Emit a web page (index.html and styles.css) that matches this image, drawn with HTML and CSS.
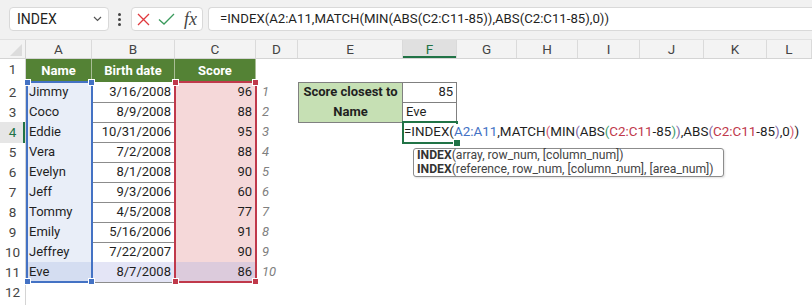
FILE: index.html
```html
<!DOCTYPE html>
<html lang="en">
  <head>
    <meta charset="UTF-8" />
    <title>INDEX MATCH closest score</title>
    <link rel="stylesheet" href="styles.css">
  </head>
  <body>
    <!-- Formula bar -->
    <header class="toolbar">
      <div class="namebox">
        <span>INDEX</span>
        <svg width="9" height="6" viewBox="0 0 9 6"><path d="M1 1l3.5 3.5L8 1" fill="none" stroke="#555" stroke-width="1.2"/></svg>
      </div>
      <div class="grip"><i></i><i></i><i></i></div>
      <div class="fxbox">
        <svg class="cancel" width="13" height="13" viewBox="0 0 13 13"><path d="M1 1l11 11M12 1L1 12" stroke="#e0393e" stroke-width="1.3" fill="none"/></svg>
        <svg class="enter" width="17" height="12" viewBox="0 0 17 12"><path d="M1 6.5l5 4.5L16 1" stroke="#3a9a5c" stroke-width="1.3" fill="none"/></svg>
        <span class="fx">fx</span>
      </div>
      <div class="formula">=INDEX(A2:A11,MATCH(MIN(ABS(C2:C11-85)),ABS(C2:C11-85),0))</div>
    </header>

    <!-- Worksheet -->
    <main class="sheet">
      <div class="row colhead">
        <div class="corner"></div>
        <div class="ch">A</div><div class="ch">B</div><div class="ch">C</div><div class="ch">D</div>
        <div class="ch">E</div><div class="ch on">F</div><div class="ch">G</div><div class="ch">H</div>
        <div class="ch">I</div><div class="ch">J</div><div class="ch">K</div><div class="ch">L</div>
      </div>

      <div class="row r1">
        <div class="rh">1</div>
        <div class="c hd">Name</div><div class="c hd">Birth date</div><div class="c hd">Score</div>
      </div>
      <div class="row">
        <div class="rh">2</div>
        <div class="c t a">Jimmy</div><div class="c t num">3/16/2008</div><div class="c t s num">96</div>
        <div class="c rank">1</div>
        <div class="c lbl top">Score closest to</div><div class="c val top num">85</div>
      </div>
      <div class="row">
        <div class="rh">3</div>
        <div class="c t a">Coco</div><div class="c t num">8/9/2008</div><div class="c t s num">88</div>
        <div class="c rank">2</div>
        <div class="c lbl">Name</div><div class="c val">Eve</div>
      </div>
      <div class="row">
        <div class="rh on">4</div>
        <div class="c t a">Eddie</div><div class="c t num">10/31/2006</div><div class="c t s num">95</div>
        <div class="c rank">3</div>
        <div class="c"></div>
        <div class="c active">
          <span class="edit">=INDEX(<span class="ref-a">A2:A11</span>,MATCH<span class="p2">(</span>MIN<span class="p3">(</span>ABS<span class="p4">(</span><span class="ref-c">C2:C11</span>-85<span class="p4">)</span><span class="p3">)</span>,ABS<span class="p3">(</span><span class="ref-c">C2:C11</span>-85<span class="p3">)</span>,0<span class="p2">)</span>)</span>
        </div>
      </div>
      <div class="row">
        <div class="rh">5</div>
        <div class="c t a">Vera</div><div class="c t num">7/2/2008</div><div class="c t s num">88</div>
        <div class="c rank">4</div>
      </div>
      <div class="row">
        <div class="rh">6</div>
        <div class="c t a">Evelyn</div><div class="c t num">8/1/2008</div><div class="c t s num">90</div>
        <div class="c rank">5</div>
      </div>
      <div class="row">
        <div class="rh">7</div>
        <div class="c t a">Jeff</div><div class="c t num">9/3/2006</div><div class="c t s num">60</div>
        <div class="c rank">6</div>
      </div>
      <div class="row">
        <div class="rh">8</div>
        <div class="c t a">Tommy</div><div class="c t num">4/5/2008</div><div class="c t s num">77</div>
        <div class="c rank">7</div>
      </div>
      <div class="row">
        <div class="rh">9</div>
        <div class="c t a">Emily</div><div class="c t num">5/16/2006</div><div class="c t s num">91</div>
        <div class="c rank">8</div>
      </div>
      <div class="row">
        <div class="rh">10</div>
        <div class="c t a">Jeffrey</div><div class="c t num">7/22/2007</div><div class="c t s num">90</div>
        <div class="c rank">9</div>
      </div>
      <div class="row">
        <div class="rh">11</div>
        <div class="c t a hit">Eve</div><div class="c t num hit">8/7/2008</div><div class="c t s num hit">86</div>
        <div class="c rank">10</div>
      </div>
      <div class="row last"><div class="rh">12</div></div>

      <!-- range highlights while editing -->
      <div class="range blue"><i class="tl"></i><i class="tr"></i><i class="bl"></i><i class="br"></i></div>
      <div class="range red"><i class="tl"></i><i class="tr"></i><i class="bl"></i><i class="br"></i></div>

      <div class="tip">
        <div><b>INDEX</b>(array, row_num, [column_num])</div>
        <div><b>INDEX</b>(reference, row_num, [column_num], [area_num])</div>
      </div>
    </main>
  </body>
</html>
```

FILE: styles.css
```css
* {
  box-sizing: border-box;
}

body {
  margin: 0;
  width: 812px;
  height: 305px;
  overflow: hidden;
  background: #fff;
  color: #1f1f1f;
  font-family: Roboto, "Liberation Sans", sans-serif;
}

/* Formula bar */
.toolbar {
  display: flex;
  align-items: center;
  height: 40px;
  padding: 0 0 1px 9px;
  background: #f1f1f1;
  border-bottom: 1px solid #e1e1e1;
}
.namebox {
  display: flex;
  align-items: center;
  justify-content: space-between;
  width: 100px;
  height: 24px;
  padding: 0 6px 0 7px;
  background: #fff;
  border: 1px solid #d9d9d9;
  border-radius: 4px;
  font-size: 14px;
}
.grip {
  display: flex;
  flex-direction: column;
  gap: 2px;
  margin: 0 10px 0 9px;
}
.grip i {
  width: 3px;
  height: 3px;
  border-radius: 50%;
  background: #444;
}
.fxbox {
  display: flex;
  align-items: center;
  width: 72px;
  height: 24px;
  padding-left: 5px;
  background: #fff;
  border: 1px solid #d9d9d9;
  border-radius: 4px;
}
.fxbox .enter {
  margin-left: 8px;
}
.fx {
  margin-left: 9px;
  font-family: "Liberation Serif", serif;
  font-style: italic;
  font-size: 18px;
  color: #444;
  line-height: 1;
}
.formula {
  flex: 1;
  height: 24px;
  margin-left: 5px;
  padding-left: 11px;
  background: #fff;
  border: 1px solid #d9d9d9;
  border-right: 0;
  border-radius: 4px 0 0 4px;
  font-size: 13.2px;
  line-height: 22px;
  white-space: nowrap;
}

/* Worksheet grid */
.sheet {
  position: relative;
  font-family: Roboto, "Liberation Sans", sans-serif;
  font-size: 13px;
}
.row {
  display: grid;
  grid-template-columns: 26px 66px 83px 81px 42px 105px 54px 60px 61px 62px 64px 63px 1fr;
  height: 20px;
}
.row.last {
  height: 23px;
}
.colhead {
  height: 19px;
  background: #f3f3f3;
  border-bottom: 1px solid #d4d4d4;
}
.corner {
  position: relative;
  border-right: 1px solid #d4d4d4;
}
.corner::after {
  content: "";
  position: absolute;
  right: 3px;
  bottom: 2px;
  border-left: 12px solid transparent;
  border-bottom: 12px solid #dcdcdc;
}
.ch {
  border-right: 1px solid #dadada;
  text-align: center;
  font-size: 13.5px;
  line-height: 18px;
  color: #444;
}
.ch.on {
  background: #e0e0e0;
  color: #217346;
  box-shadow: inset 0 -2px #217346;
}
.r1 {
  height: 23px;
}
.rh {
  border-right: 1px solid #d4d4d4;
  text-align: center;
  font-size: 13.5px;
  line-height: 21px;
  color: #444;
}
.rh.on {
  background: #e6e6e6;
  color: #217346;
  box-shadow: inset -2px 0 #217346;
}

.c {
  padding: 0 3px;
  line-height: 20px;
  white-space: nowrap;
}
.num {
  text-align: right;
}
.t {
  border-right: 1px solid #8c8c8c;
  border-bottom: 1px solid #8c8c8c;
}
.hd {
  background: #548235;
  color: #fff;
  font-weight: bold;
  text-align: center;
  line-height: 23px;
  border-right: 1px solid #a9bd96;
}
.a {
  background: #e9eef8;
}
.s {
  background: #f5d8d9;
}
.a.hit {
  background: #d4ddf1;
}
.num.hit {
  background: #e4e5f6;
}
.s.hit {
  background: #dccbdc;
}
.rank {
  padding-left: 6px;
  font-style: italic;
  color: #808080;
}

/* lookup box E2:F3 */
.lbl {
  background: #c6e0b4;
  font-weight: bold;
  text-align: center;
  border-left: 1px solid #808080;
}
.lbl,
.val {
  border-right: 1px solid #808080;
  border-bottom: 1px solid #808080;
}
.top {
  border-top: 1px solid #808080;
  line-height: 18px;
}

/* cell in edit mode */
.active {
  position: relative;
  padding-left: 1px;
  outline: 2px solid #217346;
  outline-offset: -1px;
}
.active::after {
  content: "";
  position: absolute;
  right: -4px;
  bottom: -4px;
  width: 6px;
  height: 6px;
  background: #217346;
  border: 1px solid #fff;
}
.edit {
  position: relative;
  z-index: 2;
  background: #fff;
  font-size: 13.4px;
  color: #1f1f1f;
}
.ref-a {
  color: #4472c4;
}
.ref-c {
  color: #c0394b;
}
.p2 {
  color: #d4566c;
}
.p3 {
  color: #8064a2;
}
.p4 {
  color: #3b9c6b;
}

/* coloured range outlines */
.range {
  position: absolute;
  top: 41px;
  height: 202px;
  border: 2px solid;
}
.range.blue {
  left: 26px;
  width: 67px;
  border-color: #4472c4;
  color: #4472c4;
}
.range.red {
  left: 174px;
  width: 83px;
  border-color: #c0394b;
  color: #c0394b;
}
.range i {
  position: absolute;
  width: 7px;
  height: 7px;
  background: currentColor;
  border: 1px solid #fff;
}
.range .tl { left: -4px; top: -4px; }
.range .tr { right: -4px; top: -4px; }
.range .bl { left: -4px; bottom: -4px; }
.range .br { right: -4px; bottom: -4px; }

/* function tooltip */
.tip {
  position: absolute;
  z-index: 3;
  left: 413px;
  top: 108px;
  width: 311px;
  height: 29px;
  padding: 0 3px;
  background: #fff;
  border: 1px solid #8c8c8c;
  border-radius: 3px;
  box-shadow: 1px 1px 2px rgba(0, 0, 0, 0.12);
  font-size: 12.2px;
  line-height: 13.5px;
  color: #444;
}
.tip b {
  color: #333;
}
```
